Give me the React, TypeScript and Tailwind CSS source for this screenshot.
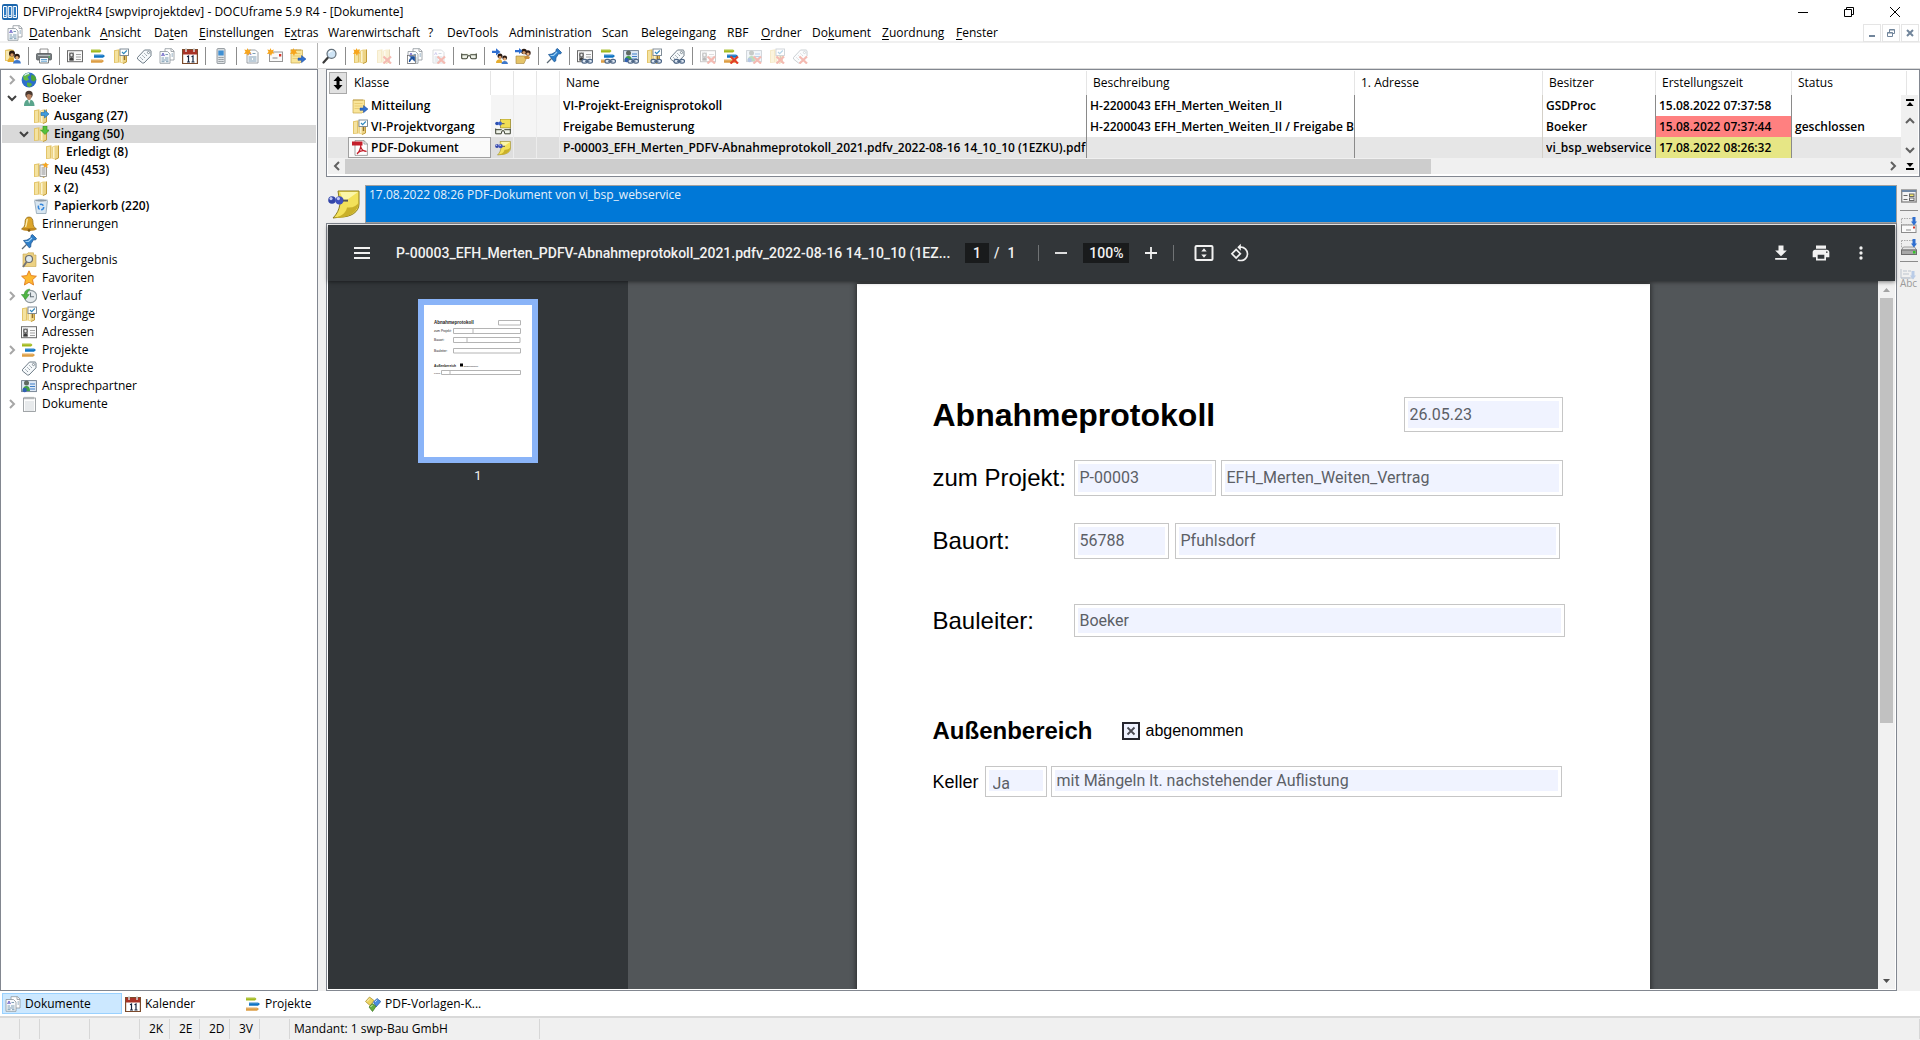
import type { ReactNode } from "react";

type IconName =
  | "app"
  | "users"
  | "printer"
  | "card"
  | "bars"
  | "folder"
  | "folderCheck"
  | "folderOut"
  | "folderIn"
  | "folderDoc"
  | "folderSearch"
  | "tag"
  | "docs"
  | "calendar"
  | "phone"
  | "doc"
  | "mail"
  | "note"
  | "search"
  | "glasses"
  | "assign"
  | "assignFolder"
  | "pin"
  | "contact"
  | "globe"
  | "person"
  | "trash"
  | "bell"
  | "star"
  | "history"
  | "notepad"
  | "pdf"
  | "sticky"
  | "stickyGlasses"
  | "cubes";

type Badge = "star" | "chain" | "cross" | "shortcut";

const folderShape = (
  <>
    <path d="M1 2.200 6.500 1.300V14.500L1 15z" fill="#e3c468" />
    <path d="M2 3 5 2.500V13.800L2 14.200z" fill="#f4e2a0" />
    <path d="M6.500 3 10 1.500h3.500V14L10 15.500 6.500 14.500z" fill="#edd486" />
    <path d="M8 3.200 9.500 2.700V14.500L8 14z" fill="#fbf3cf" />
    <path d="M13.500 1.500V14L10 15.500" fill="none" stroke="#c29c3b" />
  </>
);

const pushPin = (
  <>
    <path d="M5.500 10.500 1 15" stroke="#5d6a75" strokeWidth="1.300" />
    <path d="M2.500 6.500 6 6l4-2.500L10 1.500l1.500-1 4 4-1 1.500-2-.2L10 9.800 9.700 13 8.200 13.800z" fill="#2e7fc9" stroke="#174f8d" strokeWidth=".7" />
    <path d="m4.500 7.500 3 0 3.500-3.500" stroke="#9cd0f5" strokeWidth="1.200" fill="none" />
  </>
);

const stickyShape = (
  <>
    <path d="M5 1.500h10.500V8c0 4-4 6.500-9 6.500l-4 .5c2-2 3-4 3.500-7z" fill="#f3e15a" stroke="#8d7d1c" strokeWidth=".5" />
    <path d="M6 2h9L8 7z" fill="#fbf6a8" />
    <path d="M15.500 7c-1 2-3 3-6 2.700C9 12 7.500 14 3 15c6 .2 12-2 12.500-8z" fill="#c9b02a" />
    <circle cx="2" cy="6" r="1.900" fill="#3346a8" />
    <circle cx="5.700" cy="6.200" r="2.100" fill="#3f51bd" />
    <circle cx="1.500" cy="5.300" r=".8" fill="#c3c9f5" />
    <circle cx="5.200" cy="5.300" r=".8" fill="#c3c9f5" />
    <path d="M7.500 6.300H10" stroke="#555" />
  </>
);

const glassesShape = (
  <path
    d="M.7 5.500v4.200c0 .7.400 1 1 1h3.500c.6 0 1-.4 1.200-1l.5-2h2.200l.5 2c.2.600.6 1 1.200 1h3.500c.6 0 1-.3 1-1V5.500M1 6.700h5.700M9.300 6.700H15"
    fill="#eef2e8"
    stroke="#3c4132"
    strokeWidth="1.100"
  />
);

const docsShape = (
  <>
    <path d="M6 .7h6.500L15 3v9H6z" fill="#fff" stroke="#8e959c" strokeWidth=".8" />
    <path d="M12 .7V3.500h3" fill="none" stroke="#8e959c" strokeWidth=".8" />
    <path d="M1 3.500h7.500L11 6v9.300H1z" fill="#f8fafc" stroke="#8e959c" strokeWidth=".8" />
    <path d="m2.500 8 1.500-3 1.500 3M3 7.200h2" fill="none" stroke="#5a4fc0" strokeWidth=".8" />
    <path d="M6.500 6.500H9M2.500 10H5M6 10h3.500M2.500 12H9.500M2.500 13.700h3M7 13.700h2.500M12.500 6H14M12.500 8H14" stroke="#6f93ad" strokeWidth=".9" />
  </>
);

const contactShape = (
  <>
    <rect x=".6" y="2.600" width="14.800" height="11" fill="#dfe9f5" stroke="#6f7d8d" strokeWidth=".9" />
    <path d="M9 6h5M9 8.500h5M9 11h5" stroke="#3f7fc8" strokeWidth="1.200" />
    <circle cx="5.500" cy="5" r="2.500" fill="#5f6a63" />
    <path d="M1.500 13c0-3 1.500-5 4-5s3.500 2 3.500 5z" fill="#43a047" />
    <circle cx="3.700" cy="12" r="2.200" fill="#2f5fb5" />
  </>
);

const headsShape = (
  <>
    <circle cx="7" cy="5.500" r="3" fill="#2b1a12" />
    <circle cx="7" cy="7" r="1.700" fill="#d79a66" />
    <circle cx="12" cy="8.500" r="2.800" fill="#2b1a12" />
    <circle cx="12" cy="9.800" r="1.700" fill="#e3ad7c" />
    <path d="M2.500 14c0-3 1.500-4.500 4-4.500S9 11 9.200 14z" fill="#e5ad2f" />
    <path d="M8 15.500c.3-2.500 1.500-3.500 4-3.500s3.700 1 3.900 3.500z" fill="#3f78c9" />
  </>
);

const shapes: Record<IconName, ReactNode> = {
  app: (
    <>
      <rect x="0" y="0" width="16" height="16" rx="2" fill="#1c66ad" />
      <path d="M1.500 2.500h3.300v11H1.500zM6.300 2.500h3.400v11H6.300zM11.200 2.500h3.300v11h-3.300z" fill="#2f7cc4" stroke="#fff" strokeWidth="1" />
      <path d="M2.500 11.500h1.300M7.300 11.500h1.400M12.200 11.500h1.300" stroke="#fff" />
    </>
  ),
  users: (
    <>
      <path d="M0 2 5 1l4 1v11H0z" fill="#e6c76d" />
      <path d="M1 3h3v9H1z" fill="#f6e7b0" />
      {headsShape}
    </>
  ),
  printer: (
    <>
      <path d="M4 1h8v5H4z" fill="#fdfdfd" stroke="#777" strokeWidth=".8" />
      <rect x=".5" y="5.500" width="15" height="6.500" rx="1" fill="#777d80" stroke="#4b4f52" strokeWidth=".7" />
      <path d="M2 7.500h12" stroke="#b9bec1" />
      <path d="M3.500 9.500h9v5.500h-9z" fill="#f4f8fb" stroke="#5b5f62" strokeWidth=".8" />
      <path d="M5 11.500h6M5 13.200h6" stroke="#62a3d2" />
      <path d="M12.500 9h1.500" stroke="#3fcf4e" />
    </>
  ),
  card: (
    <>
      <rect x=".5" y="2.700" width="15" height="11" fill="#fafafa" stroke="#6a6a6a" />
      <path d="M2 4.500h5v8H2z" fill="#8b8b8b" />
      <circle cx="4.500" cy="7" r="1.700" fill="#e9e9e9" stroke="#444" strokeWidth=".8" />
      <path d="M2.500 12.500c0-2 1-3 2-3s2 1 2 3z" fill="#3b3b3b" />
      <path d="M9 6.500h5M9 9h5M9 11.500h5" stroke="#9a9a9a" strokeWidth=".9" />
    </>
  ),
  bars: (
    <>
      <path d="M1 1.500h9l1.500 1.500L10 4.500H1z" fill="#a2b91c" />
      <path d="M4 6.500h9L15 8l-2 1.700H4z" fill="#0f74c4" />
      <path d="M1 11.500h11l2 1.500-2 1.700H1z" fill="#dd9e45" />
      <path d="M1 2h9M4 7h9M1 12h11" stroke="#fff" strokeOpacity=".4" strokeWidth=".8" />
    </>
  ),
  folder: folderShape,
  folderCheck: (
    <>
      {folderShape}
      <rect x="7" y="1" width="8.500" height="6.500" fill="#fff" stroke="#74828e" strokeWidth=".9" />
      <path d="m9 4 1.700 1.700L13.800 2.500" fill="none" stroke="#2d87bd" strokeWidth="1.100" />
      <path d="M11.500 8v4" stroke="#94702b" strokeWidth="1.500" />
    </>
  ),
  folderOut: (
    <>
      {folderShape}
      <path d="M8 4.500h3.500V2L16 6l-4.500 4V7.500H8z" fill="#3f9bdc" stroke="#226ba5" strokeWidth=".6" />
    </>
  ),
  folderIn: (
    <>
      {folderShape}
      <path d="M10 0h4v4h2.500L12 8.500 7.500 4H10z" fill="#55c13c" stroke="#2f8e20" strokeWidth=".6" />
    </>
  ),
  folderDoc: (
    <>
      {folderShape}
      <path d="M7 3h6.500v11.500H7z" fill="#f5f5f5" stroke="#8d8d8d" strokeWidth=".8" />
      <path d="M8.500 6h4M8.500 8h4M8.500 10h4M8.500 12h4" stroke="#777" strokeWidth=".8" />
      <path d="m12.500 0 1 2 2.500.2-1.800 1.500.5 2.300-2.200-1.200L10.500 6l.5-2.300L9.200 2.200l2.400-.2z" fill="#f5a623" />
    </>
  ),
  folderSearch: (
    <>
      <path d="M2 2h4l1-1.200h5.500V3H15v11.500H2z" fill="#ecd183" stroke="#c7a449" strokeWidth=".6" />
      <circle cx="8" cy="7" r="3.500" fill="#dfeaf0" stroke="#6c6c6c" strokeWidth="1.200" />
      <path d="M5.500 10 2 15" stroke="#747474" strokeWidth="2" />
    </>
  ),
  tag: (
    <>
      <path d="M1.500 9.500 8.500 2h5.700L15 2.800v5L8 15H6.500L1.500 11z" fill="#f6f9fb" stroke="#6f7c87" />
      <circle cx="12.500" cy="4.500" r="1.100" fill="#fff" stroke="#6f7c87" strokeWidth=".8" />
      <path d="m4.500 9.500 2.500 2.500M6.500 7.500 9 10M8.500 5.500 11 8" stroke="#6c7883" strokeWidth="1" strokeDasharray="1.200 .7" />
    </>
  ),
  docs: docsShape,
  calendar: (
    <>
      <rect x=".6" y="1.600" width="14.800" height="14" fill="#fff" stroke="#7b4a2c" strokeWidth="1.200" />
      <rect x="1" y="2" width="14" height="4.500" fill="#a93226" />
      <path d="M4 0v4M12 0v4" stroke="#d9d9d9" strokeWidth="1.500" />
      <path d="M5 8.700 6.500 8v6M5 14h3M9.500 8.700 11 8v6M9.500 14h3" stroke="#15233f" strokeWidth="1.200" fill="none" />
    </>
  ),
  phone: (
    <>
      <rect x="4" y=".6" width="8" height="15" rx="1" fill="#dfe3e6" stroke="#7a8288" strokeWidth=".8" />
      <rect x="5.300" y="2.500" width="5.400" height="5" fill="#3f8fd2" />
      <path d="M5.500 9.500h5M5.500 11.500h5M5.500 13.500h5" stroke="#7a8288" strokeDasharray="1.200 .7" />
    </>
  ),
  doc: (
    <>
      <path d="M3 2h8.500L14 4.500V15H3z" fill="#fbfcfd" stroke="#8e959c" strokeWidth=".9" />
      <path d="m4.500 7 1.300-2.500L7 7" fill="none" stroke="#5a4fc0" strokeWidth=".8" />
      <path d="M8.500 5.500h3M4.500 9h8M4.500 11h3.500M9 11h3.500M4.500 13h8" stroke="#6f93ad" strokeWidth=".9" />
    </>
  ),
  mail: (
    <>
      <rect x="2.500" y="4" width="13" height="9.500" fill="#fafafa" stroke="#979797" />
      <path d="M12 6h2.300v2.500H12z" fill="#d8382b" />
      <path d="M5.500 10h5" stroke="#8a8a8a" />
    </>
  ),
  note: (
    <>
      <path d="M1 2h11.500v10.500L10 15H1z" fill="#f9e59a" stroke="#c7a74a" strokeWidth=".7" />
      <path d="M2 1v2M4 1v2M6 1v2M8 1v2M10 1v2" stroke="#b7963c" strokeWidth=".7" />
      <path d="M2.500 5.500h8M2.500 8h8M2.500 10.500h5" stroke="#e6c769" strokeWidth=".8" />
      <path d="M8 10h3.500V7.500L16 11l-4.500 3.700v-2.400H8z" fill="#2f6fd0" stroke="#18489a" strokeWidth=".5" />
    </>
  ),
  search: (
    <>
      <path d="M6 9.500 1.500 14.500" stroke="#3a3a3a" strokeWidth="2.200" strokeLinecap="round" />
      <circle cx="9.500" cy="5.800" r="4.500" fill="#cfe4f5" stroke="#64707a" strokeWidth="1.200" />
      <path d="M7 5c.5-1.500 2-2.300 3.500-2" stroke="#fff" strokeWidth="1.200" fill="none" />
    </>
  ),
  glasses: glassesShape,
  assign: (
    <>
      <circle cx="8" cy="8" r="2.500" fill="#2b1a12" />
      <circle cx="8" cy="9.300" r="1.500" fill="#d79a66" />
      <circle cx="12.700" cy="9.800" r="2.400" fill="#2b1a12" />
      <circle cx="12.700" cy="11" r="1.500" fill="#e3ad7c" />
      <path d="M4 15c0-2.500 1.500-3.700 3.700-3.700S10 13 10.200 15z" fill="#e5ad2f" />
      <path d="M9.500 16c.3-2.200 1.300-3 3.200-3s3 1 3.300 3z" fill="#3f78c9" />
      <path d="M0 2.700h4V.2l4.500 3.700L4 7.500V5H0z" fill="#2f6fd0" />
    </>
  ),
  assignFolder: (
    <>
      <path d="M1 8h9l2 1-3 6.500H1z" fill="#e5c469" stroke="#a3823a" strokeWidth=".6" />
      <circle cx="9" cy="3.500" r="2.800" fill="#2b1a12" />
      <circle cx="13" cy="5" r="2.700" fill="#3a2218" />
      <circle cx="9" cy="4.500" r="1.600" fill="#d79a66" />
      <circle cx="13" cy="6" r="1.600" fill="#e3ad7c" />
      <path d="M9 9c1-1.500 5-1.500 6 0l-1 2h-4z" fill="#c98f3c" />
      <path d="M0 2h4V0l3.500 3L4 6V4.200H0z" fill="#2f6fd0" />
    </>
  ),
  pin: pushPin,
  contact: contactShape,
  globe: (
    <>
      <circle cx="8" cy="8" r="7.400" fill="#2d6fcb" />
      <path d="M2 4c1.500-2.300 4-3.500 6-3.300L9 3 6.500 5 8 7.500 5.500 9 2.500 7.500z" fill="#62b946" />
      <path d="M10.500 2.500 14 4l1.400 3.500L13 9.500l-2.500-1-.5-3z" fill="#4da536" />
      <path d="m6 10.500 4 .5 1 2-2.500 2.300L6 14z" fill="#58b23e" />
      <path d="M3.500 3.500C5 2 7 1.500 8 1.700" stroke="#d7ecff" strokeWidth="1.200" fill="none" />
    </>
  ),
  person: (
    <>
      <path d="M3 16c0-4.500 2-6.500 5-6.500s5.500 2 5.500 6.500z" fill="#5aa58c" />
      <path d="M7 10h2.500L8.200 14z" fill="#e9f1ec" />
      <circle cx="8" cy="4.500" r="3.700" fill="#4a3a31" />
      <path d="M5.500 5c0 3 1.200 5 2.500 5s2.700-2 2.700-5c-1.500 0-2-1-3-1s-1.200 1-2.200 1z" fill="#b98463" />
    </>
  ),
  trash: (
    <>
      <path d="M1.500 2h13L13 15.500H3.500z" fill="#d7e5f0" stroke="#8ea2b3" strokeWidth=".8" />
      <ellipse cx="8" cy="2.500" rx="6.500" ry="1.500" fill="#8c9aa6" stroke="#e8eef3" strokeWidth=".7" />
      <circle cx="8" cy="9" r="2.700" fill="none" stroke="#3385dc" strokeWidth="1.500" strokeDasharray="4 1.600" />
    </>
  ),
  bell: (
    <>
      <path d="M8 1c3 0 4 2.500 4 5.500 0 3 1 5 3.500 6.500H.5C3 11.500 4 9.500 4 6.500 4 3.500 5 1 8 1z" fill="#dca52b" stroke="#8d6512" strokeWidth=".7" />
      <path d="M6.500 3c-1 1.500-.7 5-2 8" stroke="#fcecae" strokeWidth="1.400" fill="none" />
      <ellipse cx="8" cy="13.500" rx="7" ry="1.500" fill="#c1861b" />
      <circle cx="8" cy="14.500" r="1.300" fill="#7b5610" />
    </>
  ),
  star: (
    <path
      d="m8 .8 2.200 4.800 5.200.6-3.900 3.500 1.100 5.300L8 12.300 3.400 15l1.100-5.300L.6 6.200l5.200-.6z"
      fill="#fdb931"
      stroke="#e07b1d"
      strokeWidth=".9"
    />
  ),
  history: (
    <>
      <circle cx="9.500" cy="8.500" r="6.200" fill="#e6ebee" stroke="#909a9f" strokeWidth="1.200" />
      <path d="M9.500 4.500v4.300H13" stroke="#66727a" fill="none" strokeWidth="1.100" />
      <path d="M9 1.200C5 1.200 3.500 3.500 3.300 6.500H.3L4.500 11.500 8.300 6.500H6C6.200 4.500 7 3 9 1.200z" fill="#4fb544" stroke="#2d8a29" strokeWidth=".5" />
    </>
  ),
  notepad: (
    <>
      <rect x="2.500" y="2" width="12" height="13.500" fill="#fdfdfd" stroke="#8a8f93" strokeWidth=".8" />
      <path d="M4 .8v2.500M6 .8v2.500M8 .8v2.500M10 .8v2.500M12 .8v2.500" stroke="#8a8f93" strokeWidth=".8" />
      <path d="M4 6h9M4 8h9M4 10h9M4 12h9M4 14h9" stroke="#c7cdd2" strokeWidth=".8" />
    </>
  ),
  pdf: (
    <>
      <path d="M3 .6h9L15.400 4v11.400H3z" fill="#fff" stroke="#8e8e8e" strokeWidth=".8" />
      <path d="M12 .6V4h3.400" fill="none" stroke="#8e8e8e" strokeWidth=".8" />
      <path d="M0 1.500h10.500V5.500H0z" fill="#c31f2b" />
      <path d="M5 14c2-1.500 4-6 3.800-9M8.800 7c.7 2.500 3 4.300 5.700 4.300M5 13.500c2.500-2.500 6-3.500 9.500-2" stroke="#c31f2b" strokeWidth="1.200" fill="none" />
    </>
  ),
  sticky: stickyShape,
  stickyGlasses: (
    <>
      <path d="M5.500 0h10v9h-10z" fill="#f0de55" stroke="#8d7d1c" strokeWidth=".7" />
      <circle cx="2" cy="4.500" r="1.800" fill="#2b4fb0" />
      <circle cx="5" cy="4.500" r="2" fill="#3b63cc" />
      <path d="M7 4.700h2.500" stroke="#555" />
      <path d="M.7 9.500v5.300h5.500l.8-3h2l.8 3h5.500V9.500M.7 10.700h6M9.300 10.700h6" fill="#eef2e8" stroke="#3c4132" />
    </>
  ),
  cubes: (
    <>
      <path d="m.5 5.500 4-4.500 4.500 3.500-4 5z" fill="#ecd35d" stroke="#a58b24" strokeWidth=".7" />
      <path d="m8.500 6 3.500-3.500L15.800 5.500 11 11z" fill="#4b8ee0" stroke="#24549c" strokeWidth=".7" />
      <path d="m4 11 3.500-3.500L11 10.500 7.500 15.500z" fill="#66ad3f" stroke="#3b7620" strokeWidth=".7" />
      <path d="m2 5.500 2.700-3M10 6l2.200-2.300M5.500 11l2-2" stroke="#fff" strokeOpacity=".8" strokeWidth=".9" />
    </>
  ),
};

const badges: Record<Badge, ReactNode> = {
  star: (
    <path d="m3.500 0 .9 2.200L7 1.500 5.800 3.700 7.500 5.500 5 5.600 4 8 2.800 5.700 0 6l1.500-2.200L.3 1.500l2.400.6z" fill="#f7a51d" />
  ),
  chain: (
    <g fill="none" stroke="#4c6585" strokeWidth="1.200">
      <rect x="5" y="11.300" width="5" height="3.800" rx="1.900" fill="#dce6f2" />
      <rect x="10.500" y="11.300" width="5" height="3.800" rx="1.900" fill="#dce6f2" />
      <path d="M8 13.200h4.500" />
    </g>
  ),
  cross: <path d="m7.500 8.500 7.500 7M15 8.500l-7.500 7" stroke="#e23d25" strokeWidth="2.200" />,
  shortcut: (
    <>
      <rect x=".5" y="7.500" width="8" height="8" fill="#fff" stroke="#666" strokeWidth=".7" />
      <path d="M2.500 14c0-2.500 1-3.700 3-3.700M3.700 8.800h3.500v3.500z" stroke="#1b4f9c" strokeWidth="1.300" fill="#1b4f9c" />
    </>
  ),
};

function Icon({ name, badge, faded, className = "size-4" }: { name: IconName; badge?: Badge; faded?: boolean; className?: string }) {
  return (
    <svg viewBox="0 0 16 16" aria-hidden="true" className={`shrink-0 ${className} ${faded ? "opacity-35" : ""}`} fill="none">
      {shapes[name]}
      {badge && badges[badge]}
    </svg>
  );
}

function Chevron({ dir, className = "" }: { dir: "right" | "down" | "up" | "left"; className?: string }) {
  const paths = {
    right: "m3 1 4 4-4 4",
    left: "m7 1-4 4 4 4",
    down: "m1 3 4 4 4-4",
    up: "m1 7 4-4 4 4",
  };
  return (
    <svg viewBox="0 0 10 10" aria-hidden="true" className={`size-[10px] shrink-0 ${className}`} fill="none" stroke="currentColor" strokeWidth="2">
      <path d={paths[dir]} />
    </svg>
  );
}

function TitleBar() {
  return (
    <header className="flex h-6 shrink-0 items-center pl-[2px]">
      <Icon name="app" />
      <h1 className="ml-[5px] flex-1 truncate text-[12px]">DFViProjektR4 [swpviprojektdev] - DOCUframe 5.9 R4 - [Dokumente]</h1>
      <div className="flex h-full pr-[2px]">
        <button aria-label="Minimieren" className="grid h-full w-[46px] place-items-center">
          <svg viewBox="0 0 10 10" className="size-[10px]" stroke="#000">
            <path d="M0 5.500h10" />
          </svg>
        </button>
        <button aria-label="Wiederherstellen" className="grid h-full w-[46px] place-items-center">
          <svg viewBox="0 0 10 10" className="size-[10px]" stroke="#000" fill="none">
            <path d="M.5 2.500h7v7h-7zM2.500 2.500v-2h7v7h-2" />
          </svg>
        </button>
        <button aria-label="Schließen" className="grid h-full w-[46px] place-items-center">
          <svg viewBox="0 0 10 10" className="size-[10px]" stroke="#000">
            <path d="m0 0 10 10M10 0 0 10" />
          </svg>
        </button>
      </div>
    </header>
  );
}

// "&" marks the access key
const menu = [
  { label: "&Datenbank", width: "w-[71px]" },
  { label: "&Ansicht", width: "w-[54px]" },
  { label: "Da&ten", width: "w-[45px]" },
  { label: "&Einstellungen", width: "w-[85px]" },
  { label: "E&xtras", width: "w-[44px]" },
  { label: "Warenwirtschaft", width: "w-[100px]" },
  { label: "?", width: "w-[19px]" },
  { label: "DevTools", width: "w-[62px]" },
  { label: "Administration", width: "w-[93px]" },
  { label: "Scan", width: "w-[39px]" },
  { label: "Belegeingang", width: "w-[86px]" },
  { label: "RBF", width: "w-[34px]" },
  { label: "&Ordner", width: "w-[51px]" },
  { label: "Do&kument", width: "w-[70px]" },
  { label: "&Zuordnung", width: "w-[74px]" },
  { label: "&Fenster", width: "w-[52px]" },
];

function MenuLabel({ label }: { label: string }) {
  const at = label.indexOf("&");
  if (at < 0) return <>{label}</>;
  return (
    <>
      {label.slice(0, at)}
      <span className="underline underline-offset-2">{label[at + 1]}</span>
      {label.slice(at + 2)}
    </>
  );
}

function MenuBar() {
  return (
    <nav className="flex h-[19px] shrink-0 items-center border-b-2 border-[#f0f0f0] pl-[7px]">
      <Icon name="docs" className="mr-[6px] size-4" />
      {menu.map((item) => (
        <button key={item.label} className={`shrink-0 whitespace-nowrap text-left ${item.width}`}>
          <MenuLabel label={item.label} />
        </button>
      ))}
      <div className="ml-auto flex gap-px pr-px text-[#71859b]">
        <button aria-label="Fenster minimieren" className="grid h-[18px] w-[18px] place-items-center border border-[#e5e5e5]">
          <svg viewBox="0 0 10 10" className="size-[10px]" stroke="currentColor" strokeWidth="2">
            <path d="M2 8h6" />
          </svg>
        </button>
        <button aria-label="Fenster wiederherstellen" className="grid h-[18px] w-[18px] place-items-center border border-[#e5e5e5]">
          <svg viewBox="0 0 10 10" className="size-[10px]" stroke="currentColor" fill="none">
            <path d="M1.500 4.500h5v4h-5zM1.500 5h5M3.500 4V1.500h5v4H7M3.500 2h5" />
          </svg>
        </button>
        <button aria-label="Fenster schließen" className="grid h-[18px] w-[18px] place-items-center border border-[#e5e5e5]">
          <svg viewBox="0 0 10 10" className="size-[10px]" stroke="currentColor" strokeWidth="2">
            <path d="m2 2 6 6M8 2 2 8" />
          </svg>
        </button>
      </div>
    </nav>
  );
}

type Tool = { icon: IconName; title: string; badge?: Badge; faded?: boolean } | "sep";

const mainTools: Tool[] = [
  { icon: "users", title: "Benutzer" },
  "sep",
  { icon: "printer", title: "Drucken" },
  "sep",
  { icon: "card", title: "Adressen" },
  { icon: "bars", title: "Projekte" },
  { icon: "folderCheck", title: "Vorgänge" },
  { icon: "tag", title: "Produkte" },
  { icon: "docs", title: "Dokumente" },
  { icon: "calendar", title: "Kalender" },
  "sep",
  { icon: "phone", title: "Telefon" },
  "sep",
  { icon: "doc", badge: "star", title: "Neues Dokument" },
  { icon: "mail", badge: "star", title: "Neue E-Mail" },
  { icon: "note", badge: "star", title: "Neue Mitteilung" },
];

const docTools: Tool[] = [
  { icon: "search", title: "Suchen" },
  "sep",
  { icon: "folder", badge: "star", title: "Neuer Ordner" },
  { icon: "folder", badge: "cross", faded: true, title: "Ordner löschen" },
  "sep",
  { icon: "docs", badge: "shortcut", title: "Verknüpfung" },
  { icon: "doc", badge: "cross", faded: true, title: "Dokument löschen" },
  "sep",
  { icon: "glasses", title: "Gelesen" },
  "sep",
  { icon: "assign", title: "Weiterleiten" },
  { icon: "assignFolder", title: "Ordner zuweisen" },
  "sep",
  { icon: "pin", title: "Anheften" },
  "sep",
  { icon: "card", badge: "chain", title: "Adresse zuordnen" },
  { icon: "bars", badge: "chain", title: "Projekt zuordnen" },
  { icon: "contact", badge: "chain", title: "Ansprechpartner zuordnen" },
  { icon: "folderCheck", badge: "chain", title: "Vorgang zuordnen" },
  { icon: "tag", badge: "chain", title: "Produkt zuordnen" },
  "sep",
  { icon: "card", badge: "cross", faded: true, title: "Adresse lösen" },
  { icon: "bars", badge: "cross", title: "Projekt lösen" },
  { icon: "contact", badge: "cross", faded: true, title: "Ansprechpartner lösen" },
  { icon: "folderCheck", badge: "cross", faded: true, title: "Vorgang lösen" },
  { icon: "tag", badge: "cross", faded: true, title: "Produkt lösen" },
];

function ToolGroup({ tools }: { tools: Tool[] }) {
  return (
    <div className="flex items-center">
      {tools.map((tool, i) =>
        tool === "sep" ? (
          <div key={i} className="flex w-2 justify-center">
            <div className="h-[18px] w-px bg-[#8c8c8c]" />
          </div>
        ) : (
          <button key={i} aria-label={tool.title} className="grid h-[23px] w-[23px] place-items-center">
            <Icon name={tool.icon} badge={tool.badge} faded={tool.faded} />
          </button>
        ),
      )}
    </div>
  );
}

function Toolbar() {
  return (
    <div className="flex h-[26px] shrink-0 border-b border-[#d9d9d9]">
      <div className="flex w-[318px] shrink-0 items-center border-r border-[#b4b4b4] pl-px">
        <ToolGroup tools={mainTools} />
      </div>
      <ToolGroup tools={docTools} />
    </div>
  );
}

const tree: { label: string; icon: IconName; level: 0 | 1 | 2; bold?: boolean; arrow?: "right" | "down"; selected?: boolean }[] = [
  { label: "Globale Ordner", icon: "globe", level: 0, arrow: "right" },
  { label: "Boeker", icon: "person", level: 0, arrow: "down" },
  { label: "Ausgang (27)", icon: "folderOut", level: 1, bold: true },
  { label: "Eingang (50)", icon: "folderIn", level: 1, bold: true, arrow: "down", selected: true },
  { label: "Erledigt (8)", icon: "folder", level: 2, bold: true },
  { label: "Neu (453)", icon: "folderDoc", level: 1, bold: true },
  { label: "x (2)", icon: "folder", level: 1, bold: true },
  { label: "Papierkorb (220)", icon: "trash", level: 1, bold: true },
  { label: "Erinnerungen", icon: "bell", level: 0 },
  { label: "", icon: "pin", level: 0 },
  { label: "Suchergebnis", icon: "folderSearch", level: 0 },
  { label: "Favoriten", icon: "star", level: 0 },
  { label: "Verlauf", icon: "history", level: 0, arrow: "right" },
  { label: "Vorgänge", icon: "folderCheck", level: 0 },
  { label: "Adressen", icon: "card", level: 0 },
  { label: "Projekte", icon: "bars", level: 0, arrow: "right" },
  { label: "Produkte", icon: "tag", level: 0 },
  { label: "Ansprechpartner", icon: "contact", level: 0 },
  { label: "Dokumente", icon: "notepad", level: 0, arrow: "right" },
];

const indent = ["pl-[5px]", "pl-[17px]", "pl-[29px]"];

function FolderTree() {
  return (
    <aside className="w-[318px] shrink-0 border border-[#828790] bg-white p-px">
      <ul>
        {tree.map((node, i) => (
          <li key={i} className={`flex h-[18px] items-center ${indent[node.level]} ${node.selected ? "bg-[#d9d9d9]" : ""}`}>
            <span className="flex w-[14px] shrink-0">
              {node.arrow && <Chevron dir={node.arrow} className={node.arrow === "down" ? "text-[#404040]" : "text-[#a6a6a6]"} />}
            </span>
            <Icon name={node.icon} />
            <span className={`ml-[5px] whitespace-nowrap ${node.bold ? "font-semibold" : ""}`}>{node.label}</span>
          </li>
        ))}
      </ul>
    </aside>
  );
}

const rows: {
  icon: IconName;
  klasse: string;
  flag?: IconName;
  name: string;
  text: string;
  owner: string;
  time: string;
  timeBg?: string;
  status?: string;
  selected?: boolean;
}[] = [
  {
    icon: "note",
    klasse: "Mitteilung",
    name: "VI-Projekt-Ereignisprotokoll",
    text: "H-2200043 EFH_Merten_Weiten_II",
    owner: "GSDProc",
    time: "15.08.2022 07:37:58",
  },
  {
    icon: "folderCheck",
    klasse: "VI-Projektvorgang",
    flag: "stickyGlasses",
    name: "Freigabe Bemusterung",
    text: "H-2200043 EFH_Merten_Weiten_II / Freigabe B",
    owner: "Boeker",
    time: "15.08.2022 07:37:44",
    timeBg: "bg-[#ff8080]",
    status: "geschlossen",
  },
  {
    icon: "pdf",
    klasse: "PDF-Dokument",
    flag: "sticky",
    name: "P-00003_EFH_Merten_PDFV-Abnahmeprotokoll_2021.pdfv_2022-08-16 14_10_10 (1EZKU).pdf",
    text: "",
    owner: "vi_bsp_webservice",
    time: "17.08.2022 08:26:32",
    timeBg: "bg-[#e6e685]",
    selected: true,
  },
];

function Cell({ children, className = "border-[#8a8a8a]" }: { children?: ReactNode; className?: string }) {
  return (
    <td className={`border-r pl-[3px] pr-0 ${className}`}>
      <div className="overflow-hidden whitespace-nowrap">{children}</div>
    </td>
  );
}

function DocumentList() {
  const head = "border-r border-[#e5e5e5] pl-[6px] text-left font-normal";
  return (
    <section className="shrink-0 border border-[#828790] bg-white p-px pb-[2px]">
      <div className="flex">
        <div className="min-w-0 flex-1">
          <table className="w-full table-fixed border-separate border-spacing-0">
            <colgroup>
              <col className="w-5" />
              <col className="w-[143px]" />
              <col className="w-[23px]" />
              <col className="w-[23px]" />
              <col className="w-[23px]" />
              <col />
              <col className="w-[268px]" />
              <col className="w-[188px]" />
              <col className="w-[113px]" />
              <col className="w-[136px]" />
              <col className="w-[109px]" />
            </colgroup>
            <thead>
              <tr className="h-6">
                <th className="p-0">
                  <button aria-label="Sortieren" className="ml-px grid h-[22px] w-[18px] place-items-center border border-[#a9a9a9] bg-[#e1e1e1]">
                    <svg viewBox="0 0 10 14" className="h-[14px] w-[10px]" fill="#000">
                      <path d="M5 0 9.500 5H6.500v4h3L5 14 .5 9h3V5h-3z" />
                    </svg>
                  </button>
                </th>
                <th className={head}>Klasse</th>
                <th className={head} aria-label="Gelesen" />
                <th className={head} aria-label="Anlage" />
                <th className={head} aria-label="Markierung" />
                <th className={head}>Name</th>
                <th className={head}>Beschreibung</th>
                <th className={head}>1. Adresse</th>
                <th className={head}>Besitzer</th>
                <th className={head}>Erstellungszeit</th>
                <th className="pl-[6px] text-left font-normal">Status</th>
              </tr>
            </thead>
            <tbody className="font-semibold">
              {rows.map((row) => {
                const flagBg = row.selected ? "bg-[#dedede]" : "bg-[#f5f5f5]";
                return (
                  <tr key={row.klasse} className={`h-[21px] ${row.selected ? "bg-[#e6e6e6]" : ""}`}>
                    <td className="p-0" />
                    <td className="p-0">
                      <div className={`flex h-[21px] items-center border pl-[3px] ${row.selected ? "border-[#a0a0a0] bg-[#fafafa]" : "border-transparent"}`}>
                        <Icon name={row.icon} />
                        <span className="ml-[3px] whitespace-nowrap">{row.klasse}</span>
                      </div>
                    </td>
                    <td className={`border-r border-[#ececec] p-0 ${flagBg}`}>{row.flag && <Icon name={row.flag} className="ml-1 size-4" />}</td>
                    <td className={`border-r border-[#ececec] p-0 ${flagBg}`} />
                    <td className={`border-r border-[#ececec] p-0 ${flagBg}`} />
                    <Cell>{row.name}</Cell>
                    <Cell>{row.text}</Cell>
                    <Cell className="border-[#d4d0c8]" />
                    <Cell>{row.owner}</Cell>
                    <Cell className={`border-[#8a8a8a] ${row.timeBg ?? ""}`}>{row.time}</Cell>
                    <td className="pl-[3px]">{row.status}</td>
                  </tr>
                );
              })}
            </tbody>
          </table>
        </div>
        <div className="flex w-[17px] shrink-0 flex-col">
          <div className="h-6 w-[6px] border-r border-[#e5e5e5]" />
          <div className="flex flex-1 flex-col items-center bg-[#f0f0f0] pt-[4px] pb-[3px] text-[#606060]">
            <svg viewBox="0 0 8 8" className="size-2" fill="#000">
              <path d="M0 0h8v2H0zM4 3l3.500 4h-7z" />
            </svg>
            <Chevron dir="up" className="mt-[9px]" />
            <Chevron dir="down" className="mt-auto" />
          </div>
        </div>
      </div>
      <div className="flex h-4 items-center bg-[#f0f0f0] text-[#606060]">
        <span className="flex w-[17px] justify-center">
          <Chevron dir="left" />
        </span>
        <div className="flex h-full flex-1">
          <div className="mt-px w-[70.5%] bg-[#cdcdcd]" />
        </div>
        <Chevron dir="right" className="mx-[3px]" />
        <span className="flex w-[17px] justify-center">
          <svg viewBox="0 0 8 8" className="size-2" fill="#000">
            <path d="M0 6h8v2H0zM4 5 .5 1h7z" />
          </svg>
        </span>
      </div>
    </section>
  );
}

function Thumbnail() {
  return (
    <svg viewBox="0 0 108 152" aria-hidden="true" className="h-[152px] w-[108px] bg-white font-['Liberation_Sans']" fill="none">
      <g fill="#222">
        <text x="10" y="19" fontSize="4.500" fontWeight="700">Abnahmeprotokoll</text>
        <text x="10" y="27" fontSize="3.200">zum Projekt:</text>
        <text x="10" y="36" fontSize="3.200">Bauort:</text>
        <text x="10" y="47" fontSize="3.200">Bauleiter:</text>
        <text x="10" y="62" fontSize="3.300" fontWeight="700">Außenbereich</text>
        <text x="39.500" y="61.500" fontSize="2.400">abgenommen</text>
        <text x="10" y="68.500" fontSize="2.500">Keller</text>
      </g>
      <rect x="36" y="58.500" width="3" height="3" fill="#000" />
      <path
        d="M74.500 15.500h22v4.500h-22zM29.500 23.500h67v5h-67zM49 23.500v5M29.500 32.500h66.500v5h-66.500zM43 32.500v5M29.500 43.500h67v4.500h-67zM17.500 65.500h79v4h-79zM26 65.500v4"
        stroke="#b4b4b4"
      />
    </svg>
  );
}

function Field({ id, value, label, className }: { id: string; value: string; label?: string; className: string }) {
  return (
    <div className={`flex border border-[#c6c6c6] p-[3px] ${className}`}>
      <input
        id={id}
        aria-label={label}
        defaultValue={value}
        className="w-full min-w-0 bg-[#f0f3ff] px-[2px] font-[Roboto] text-[16px] text-[#5c5f66] outline-none"
      />
    </div>
  );
}

function ProtocolPage() {
  return (
    <form className="h-[1122px] w-[793px] shrink-0 bg-white pt-[113px] pl-[76px] font-['Liberation_Sans'] text-[24px] leading-7 text-black shadow-[0_0_5px_1px_rgba(0,0,0,0.5)]">
      <div className="flex h-[35px] w-[630px] items-center justify-between">
        <h2 className="text-[32px] font-bold">Abnahmeprotokoll</h2>
        <Field id="datum" label="Datum" value="26.05.23" className="h-full w-[159px]" />
      </div>
      <div className="mt-7 flex h-9 items-center">
        <label htmlFor="projekt" className="w-[141px]">zum Projekt:</label>
        <Field id="projekt" value="P-00003" className="h-full w-[142px]" />
        <Field id="projektname" label="Projektname" value="EFH_Merten_Weiten_Vertrag" className="ml-[5px] h-full w-[342px]" />
      </div>
      <div className="mt-[27px] flex h-9 items-center">
        <label htmlFor="plz" className="w-[141px]">Bauort:</label>
        <Field id="plz" value="56788" className="h-full w-[95px]" />
        <Field id="ort" label="Ort" value="Pfuhlsdorf" className="ml-[6px] h-full w-[385px]" />
      </div>
      <div className="mt-[45px] flex h-[33px] items-center">
        <label htmlFor="bauleiter" className="w-[141px]">Bauleiter:</label>
        <Field id="bauleiter" value="Boeker" className="h-full w-[491px]" />
      </div>
      <div className="mt-20 flex items-center">
        <h3 className="w-[189px] font-bold">Außenbereich</h3>
        <label className="flex items-center gap-[6px] text-[16px]">
          <span className="relative flex">
            <input type="checkbox" defaultChecked className="peer size-[18px] appearance-none border-2 border-[#26262e] bg-[#f0f3ff]" />
            <svg viewBox="0 0 18 18" aria-hidden="true" className="pointer-events-none absolute inset-0 hidden size-[18px] peer-checked:block" stroke="#4a4a52" strokeWidth="1.800">
              <path d="m5.500 5.500 7 7M12.500 5.500l-7 7" />
            </svg>
          </span>
          abgenommen
        </label>
      </div>
      <div className="mt-[21px] flex h-[31px] items-center text-[18px]">
        <label htmlFor="keller" className="w-[52px]">Keller</label>
        <div className="flex h-full w-[62px] border border-[#c6c6c6] p-[3px] pb-[5px]">
          <input id="keller" defaultValue="Ja" className="w-full min-w-0 bg-[#f0f3ff] px-1 pt-[6px] font-[Roboto] text-[16px] text-[#5c5f66] outline-none" />
        </div>
        <Field id="maengel" label="Mängel" value="mit Mängeln lt. nachstehender Auflistung" className="ml-1 h-full w-[511px] pb-[5px]" />
      </div>
    </form>
  );
}

function PdfToolbar() {
  return (
    <div className="z-10 flex h-14 shrink-0 items-center bg-[#323639] pl-[26px] font-[Roboto] text-[14px] font-medium text-[#f1f1f1] shadow-[0_1px_4px_rgba(0,0,0,0.5)]">
      <button aria-label="Menü">
        <svg viewBox="0 0 16 12" className="h-3 w-4" stroke="currentColor" strokeWidth="2">
          <path d="M0 1h16M0 6h16M0 11h16" />
        </svg>
      </button>
      <span className="ml-[26px] w-[569px] whitespace-nowrap">P-00003_EFH_Merten_PDFV-Abnahmeprotokoll_2021.pdfv_2022-08-16 14_10_10 (1EZ...</span>
      <input aria-label="Seite" defaultValue="1" className="h-5 w-6 bg-[#191b1c] text-center outline-none" />
      <span className="ml-[5px]">/</span>
      <span className="ml-2">1</span>
      <div className="ml-[23px] h-4 w-px bg-[#707375]" />
      <button aria-label="Verkleinern" className="ml-4 grid w-3 place-items-center">
        <svg viewBox="0 0 12 12" className="size-3" stroke="currentColor" strokeWidth="1.800">
          <path d="M0 6h12" />
        </svg>
      </button>
      <input aria-label="Zoom" defaultValue="100%" className="ml-4 h-5 w-[46px] bg-[#191b1c] text-center outline-none" />
      <button aria-label="Vergrößern" className="ml-4 grid w-3 place-items-center">
        <svg viewBox="0 0 12 12" className="size-3" stroke="currentColor" strokeWidth="1.800">
          <path d="M0 6h12M6 0v12" />
        </svg>
      </button>
      <div className="ml-4 h-4 w-px bg-[#707375]" />
      <button aria-label="An Seite anpassen" className="ml-5">
        <svg viewBox="0 0 20 18" className="h-[18px] w-5" fill="none" stroke="currentColor" strokeWidth="2">
          <rect x="1.500" y="2" width="17" height="14" rx="1" />
          <path d="M10 4.200 12.700 7.500H7.300zM10 13.800l2.700-3.300H7.300z" fill="currentColor" stroke="none" />
        </svg>
      </button>
      <button aria-label="Drehen" className="ml-4">
        <svg viewBox="0 0 24 24" className="size-5" fill="currentColor">
          <path d="M7.340 6.410.860 12.900l6.490 6.480 6.490-6.480zM3.690 12.900l3.660-3.660L11 12.900l-3.660 3.660zM19.360 6.640A8.950 8.950 0 0 0 13 4V.760L8.760 5 13 9.240V6c1.790 0 3.580.68 4.950 2.050a7.007 7.007 0 0 1 0 9.900 6.973 6.973 0 0 1-7.790 1.440l-1.490 1.490C10.020 21.620 11.510 22 13 22c2.300 0 4.610-.88 6.360-2.640a8.980 8.980 0 0 0 0-12.720z" />
        </svg>
      </button>
      <div className="ml-auto flex items-center gap-5 pr-6">
        <button aria-label="Herunterladen">
          <svg viewBox="0 0 24 24" className="size-5" fill="currentColor">
            <path d="M19 9h-4V3H9v6H5l7 7zM5 18v2h14v-2z" />
          </svg>
        </button>
        <button aria-label="Drucken">
          <svg viewBox="0 0 24 24" className="size-5" fill="currentColor">
            <path d="M19 8H5c-1.660 0-3 1.340-3 3v6h4v4h12v-4h4v-6c0-1.660-1.340-3-3-3zm-3 11H8v-5h8v5zm3-7c-.55 0-1-.45-1-1s.45-1 1-1 1 .45 1 1-.45 1-1 1zm-1-9H6v4h12V3z" />
          </svg>
        </button>
        <button aria-label="Mehr">
          <svg viewBox="0 0 24 24" className="size-5" fill="currentColor">
            <path d="M12 8a2 2 0 1 0 0-4 2 2 0 0 0 0 4zm0 2a2 2 0 1 0 0 4 2 2 0 0 0 0-4zm0 6a2 2 0 1 0 0 4 2 2 0 0 0 0-4z" />
          </svg>
        </button>
      </div>
    </div>
  );
}

function PdfViewer() {
  return (
    <section className="flex min-h-0 flex-1 flex-col border border-[#828790] bg-white p-px">
      <PdfToolbar />
      <div className="flex min-h-0 flex-1">
        <div className="flex w-[300px] shrink-0 flex-col items-center bg-[#323639] pt-[18px]">
          <button aria-label="Seite 1" className="border-[6px] border-[#8ab4f8]">
            <Thumbnail />
          </button>
          <span className="mt-1 font-[Roboto] text-[13px] leading-[18px] text-[#f1f1f1]">1</span>
        </div>
        <div className="flex min-w-0 flex-1 justify-center overflow-hidden bg-[#525659] pt-[3px]">
          <ProtocolPage />
        </div>
        <div className="flex w-[17px] shrink-0 flex-col items-center bg-[#f1f1f1]">
          <span className="grid h-[17px] place-items-center">
            <svg viewBox="0 0 7 4" className="h-1 w-[7px]" fill="#a3a3a3">
              <path d="M3.500 0 7 4H0z" />
            </svg>
          </span>
          <div className="flex w-[13px] flex-1 flex-col">
            <div className="h-[63%] bg-[#c1c1c1]" />
          </div>
          <span className="grid h-[17px] place-items-center">
            <svg viewBox="0 0 7 4" className="h-1 w-[7px]" fill="#505050">
              <path d="M0 0h7L3.500 4z" />
            </svg>
          </span>
        </div>
      </div>
    </section>
  );
}

function SideTools() {
  return (
    <div className="flex w-[23px] shrink-0 flex-col items-center pt-[3px]">
      <button aria-label="Vorschau">
        <svg viewBox="0 0 16 16" className="size-4" fill="none" stroke="#666">
          <rect x=".7" y="2" width="14.500" height="12" fill="#f4f4f4" stroke="#8a8a8a" strokeWidth="1.400" />
          <path d="M1 3h14" stroke="#6f87a6" strokeWidth="2" />
          <path d="M2.500 7.500h4M2.500 11.500h4" />
          <rect x="8.500" y="6" width="4.500" height="2.500" fill="#f5e96b" />
          <rect x="8.500" y="10" width="4.500" height="2.500" fill="#f4f4f4" />
        </svg>
      </button>
      <div className="mt-[6px] h-px w-[18px] bg-[#8c8c8c]" />
      <button aria-label="E-Mail speichern" className="mt-[6px]">
        <svg viewBox="0 0 16 16" className="size-4" fill="none">
          <path d="M.5 1.500h12V8H.5z" fill="#eee" stroke="#aaa" strokeDasharray="1.500 1" />
          <rect x=".5" y="8" width="14.500" height="7.500" fill="#fafafa" stroke="#8c8c8c" />
          <path d="M12 9.500h2v2h-2z" fill="#d8382b" />
          <path d="M5 13h5" stroke="#8c8c8c" />
          <path d="M11.500 0h3v4.500H16L13 8.500l-3-4h1.500z" fill="#2f6fd0" />
        </svg>
      </button>
      <button aria-label="Auf Laufwerk speichern" className="mt-[6px]">
        <svg viewBox="0 0 16 16" className="size-4" fill="none">
          <path d="M.5 1.500h12V9H.5z" fill="#eee" stroke="#aaa" strokeDasharray="1.500 1" />
          <path d="m2.500 8-2 3h15l-2-3z" fill="#e4e4e4" stroke="#8c8c8c" strokeWidth=".8" />
          <rect x=".5" y="11" width="15" height="4.500" fill="#a8a8a8" stroke="#6d6d6d" />
          <path d="M12 12h2.500v2.500H12z" fill="#35c32b" />
          <path d="M11.500 0h3v4.500H16L13 8.500l-3-4h1.500z" fill="#2f6fd0" />
        </svg>
      </button>
      <div className="mt-[6px] h-px w-[18px] bg-[#8c8c8c]" />
      <button aria-label="Text übernehmen" className="mt-[6px] text-[10px] leading-[10px] text-[#9a9a9a]">
        <svg viewBox="0 0 16 16" className="size-4 opacity-50" fill="none">
          <path d="M1 1v9h9M1 10h13M3 3h4M3 6h6M8 3h3" stroke="#8c9bb0" />
          <path d="M11.500 3h3v4.500H16L13 11.500l-3-4h1.500z" fill="#86a9e0" />
        </svg>
        <span className="-mt-[6px] block">Abc</span>
      </button>
    </div>
  );
}

const tabs: { label: string; icon: IconName; active?: boolean }[] = [
  { label: "Dokumente", icon: "docs", active: true },
  { label: "Kalender", icon: "calendar" },
  { label: "Projekte", icon: "bars" },
  { label: "PDF-Vorlagen-K...", icon: "cubes" },
];

function WindowTabs() {
  return (
    <nav className="flex h-[27px] shrink-0 border-b-2 border-[#d9d9d9] bg-white px-[2px] py-[2px]">
      {tabs.map((tab) => (
        <button
          key={tab.label}
          className={`flex w-[120px] shrink-0 items-center gap-1 whitespace-nowrap border pl-[2px] ${tab.active ? "border-[#99d1ff] bg-[#cce8ff]" : "border-transparent"}`}
        >
          <Icon name={tab.icon} />
          {tab.label}
        </button>
      ))}
    </nav>
  );
}

const statusCells = [
  { text: "", width: "w-5" },
  { text: "", width: "w-5" },
  { text: "", width: "w-[50px]" },
  { text: "", width: "w-[50px]" },
  { text: "2K", width: "w-[30px] pl-[9px]" },
  { text: "2E", width: "w-[30px] pl-[9px]" },
  { text: "2D", width: "w-[30px] pl-[9px]" },
  { text: "3V", width: "w-[30px] pl-[9px]" },
  { text: "", width: "w-[30px]" },
  { text: "Mandant: 1 swp-Bau GmbH", width: "w-[250px] pl-1" },
  { text: "", width: "flex-1" },
];

function StatusBar() {
  return (
    <footer className="flex h-[22px] shrink-0 py-px leading-[20px]">
      {statusCells.map((cell, i) => (
        <div key={i} className={`border-r border-[#d7d7d7] ${cell.width}`}>
          {cell.text}
        </div>
      ))}
    </footer>
  );
}

export default function App() {
  return (
    <div className="flex h-screen flex-col overflow-hidden bg-[#f0f0f0] font-['Open_Sans',sans-serif] text-[12px] leading-4 text-black">
      <div className="shrink-0 bg-white">
        <TitleBar />
        <MenuBar />
        <Toolbar />
      </div>

      <div className="flex min-h-0 flex-1 gap-2">
        <FolderTree />
        <main className="flex min-w-0 flex-1 flex-col">
          <DocumentList />
          <div className="mt-2 flex min-h-0 flex-1">
            <div className="flex min-w-0 flex-1 flex-col">
              <div className="flex h-[38px] shrink-0">
                <span className="flex w-[39px] shrink-0 items-center pl-[2px]">
                  <Icon name="sticky" className="size-8" />
                </span>
                <p className="flex-1 border border-[#a0a0a0] bg-[#0078d7] pt-px pl-[3px] text-[#e6f1fb]">
                  17.08.2022 08:26 PDF-Dokument von vi_bsp_webservice
                </p>
              </div>
              <PdfViewer />
            </div>
            <SideTools />
          </div>
        </main>
      </div>

      <WindowTabs />
      <StatusBar />
    </div>
  );
}
